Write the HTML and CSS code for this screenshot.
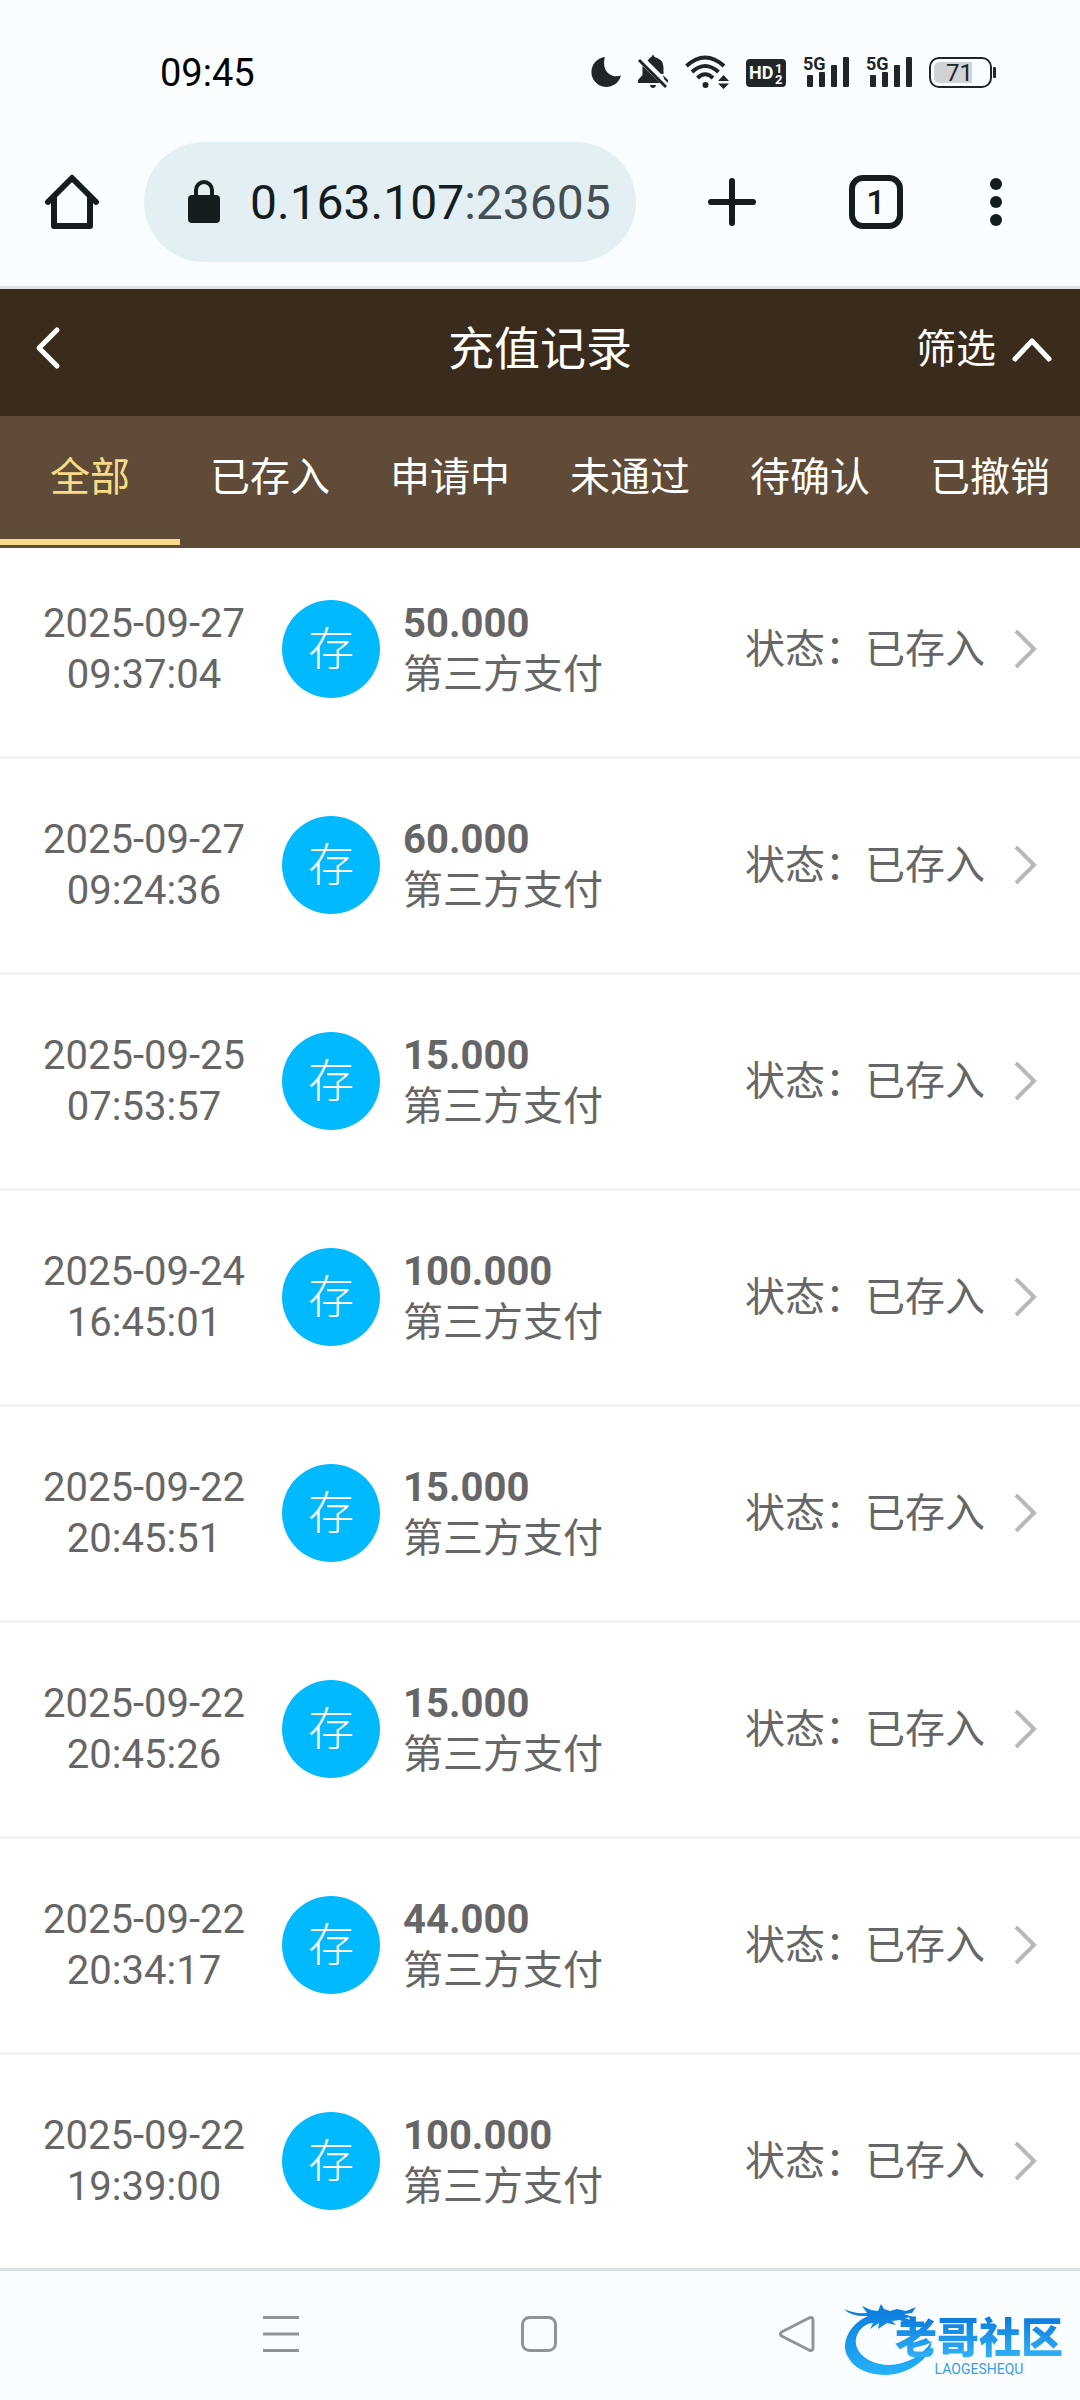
FILE: index.html
```html
<!DOCTYPE html>
<html lang="zh-CN">
<head>
<meta charset="utf-8">
<meta name="viewport" content="width=device-width, initial-scale=1">
<title>充值记录</title>
<link rel="stylesheet" href="styles.css">
</head>
<body>
<div class="status-bar">
  <time class="clock">09:45</time>
  <div class="status-icons">
    <svg width="29" height="34" viewBox="0 0 29 34" fill="#212527"><path d="M13 2A15 15 0 1 0 29 20.500C26 21.500 22 22 18 19.500C12 16 11 8 13 2Z"/></svg>
    <svg width="30" height="34" viewBox="0 0 30 34" fill="#212527"><path d="M11 4Q12 2 13.500 2Q14 0 15 0Q16 0 16.500 2Q25 4 25.500 12V19L23 19L9.500 5.500ZM4.500 11L22 28H0V25L4.500 20ZM12 30H18Q17.500 33 15 33Q12.500 33 12 30Z"/><path d="M25 20L30 25V28L26 24Z"/><path d="M1 5L28 32" stroke="#212527" stroke-width="3"/></svg>
    <svg width="44" height="34" viewBox="0 0 44 34" fill="none" stroke="#212527" stroke-width="4"><path d="M1.500 11Q20 -6 39 11"/><path d="M7 17Q20 5 33.500 17"/><path d="M12.500 23Q20 15.500 28 23"/><circle cx="20.500" cy="30" r="3" fill="#212527" stroke="none"/><path d="M38.500 20L44 26H33ZM33 28.500H44L38.500 34Z" fill="#212527" stroke="none"/></svg>
    <svg width="40" height="34" viewBox="0 0 40 34"><rect y="4" width="40" height="28" rx="4" fill="#212527"/><g class="svg-text" fill="#f9fdff"><text x="3" y="24" font-size="18" font-weight="700">HD</text><text x="29" y="18" font-size="13" font-weight="700">1</text><text x="29" y="29" font-size="13" font-weight="700">2</text></g></svg>
    <svg width="46" height="34" viewBox="0 0 46 34" fill="#212527"><text class="svg-text" x="0" y="15" font-size="18" font-weight="700">5G</text><rect x="4" y="20" width="6" height="12" rx="1"/><rect x="16" y="17" width="6" height="15" rx="1"/><rect x="28" y="10" width="6" height="22" rx="1"/><rect x="40" y="2" width="6" height="30" rx="1"/></svg>
    <svg width="46" height="34" viewBox="0 0 46 34" fill="#212527"><text class="svg-text" x="0" y="15" font-size="18" font-weight="700">5G</text><rect x="4" y="20" width="6" height="12" rx="1"/><rect x="16" y="17" width="6" height="15" rx="1"/><rect x="28" y="10" width="6" height="22" rx="1"/><rect x="40" y="2" width="6" height="30" rx="1"/></svg>
    <svg width="67" height="34" viewBox="0 0 67 34"><rect x="1" y="3" width="61" height="29" rx="9" fill="none" stroke="#212527" stroke-width="2"/><path d="M11 7H43V28H11Q5 28 5 22V13Q5 7 11 7Z" fill="#d0d3d5"/><rect x="64" y="12" width="3" height="11" rx="1" fill="#212527"/><text class="svg-text" x="17" y="26" font-size="24" fill="#212527">71</text></svg>
  </div>
</div>

<div class="toolbar">
  <button class="tool tool-home" type="button" aria-label="主页"><svg width="54" height="54" viewBox="0 0 54 54" fill="none" stroke="#141c1e" stroke-width="6" stroke-linejoin="round" stroke-linecap="round"><path d="M3 27L27 3L51 27"/><path d="M9 23V51H45V23"/></svg></button>
  <div class="omnibox">
    <svg width="32" height="44" viewBox="0 0 32 44"><path d="M8 17V10A8 8 0 0 1 24 10V17" fill="none" stroke="#141c1e" stroke-width="4"/><rect y="15" width="32" height="28" rx="4" fill="#141c1e"/></svg>
    <p class="url">0.163.107<span class="port">:23605</span></p>
  </div>
  <button class="tool tool-add" type="button" aria-label="新标签页"><svg width="48" height="48" viewBox="0 0 48 48" stroke="#141c1e" stroke-width="6" stroke-linecap="round"><path d="M24 3V45M3 24H45"/></svg></button>
  <button class="tool" type="button" aria-label="标签页"><span class="tab-count">1</span></button>
  <button class="tool tool-menu" type="button" aria-label="菜单"><svg width="12" height="48" viewBox="0 0 12 48" fill="#141c1e"><circle cx="6" cy="6" r="6"/><circle cx="6" cy="24" r="6"/><circle cx="6" cy="42" r="6"/></svg></button>
</div>

<header class="page-header">
  <button class="back" type="button" aria-label="返回"><svg width="24" height="42" viewBox="0 0 24 42" fill="none" stroke="#fff" stroke-width="5" stroke-linecap="round" stroke-linejoin="round"><path d="M21 3L3 21L21 39"/></svg></button>
  <h1 class="title">充值记录</h1>
  <button class="filter" type="button">筛选<svg width="40" height="24" viewBox="0 0 40 24" fill="none" stroke="#fff" stroke-width="5" stroke-linecap="round" stroke-linejoin="round"><path d="M3 21L20 3L37 21"/></svg></button>
</header>

<nav class="tabs">
  <button class="tab active" type="button">全部</button>
  <button class="tab" type="button">已存入</button>
  <button class="tab" type="button">申请中</button>
  <button class="tab" type="button">未通过</button>
  <button class="tab" type="button">待确认</button>
  <button class="tab" type="button">已撤销</button>
</nav>

<ul class="records">
  <li><a class="record" href="#"><time class="date">2025-09-27<br>09:37:04</time><span class="badge">存</span><span class="detail"><b>50.000</b><br>第三方支付</span><span class="state">状态：已存入</span><svg class="go" viewBox="0 0 24 42"><path d="M3 3L21 21L3 39"/></svg></a></li>
  <li><a class="record" href="#"><time class="date">2025-09-27<br>09:24:36</time><span class="badge">存</span><span class="detail"><b>60.000</b><br>第三方支付</span><span class="state">状态：已存入</span><svg class="go" viewBox="0 0 24 42"><path d="M3 3L21 21L3 39"/></svg></a></li>
  <li><a class="record" href="#"><time class="date">2025-09-25<br>07:53:57</time><span class="badge">存</span><span class="detail"><b>15.000</b><br>第三方支付</span><span class="state">状态：已存入</span><svg class="go" viewBox="0 0 24 42"><path d="M3 3L21 21L3 39"/></svg></a></li>
  <li><a class="record" href="#"><time class="date">2025-09-24<br>16:45:01</time><span class="badge">存</span><span class="detail"><b>100.000</b><br>第三方支付</span><span class="state">状态：已存入</span><svg class="go" viewBox="0 0 24 42"><path d="M3 3L21 21L3 39"/></svg></a></li>
  <li><a class="record" href="#"><time class="date">2025-09-22<br>20:45:51</time><span class="badge">存</span><span class="detail"><b>15.000</b><br>第三方支付</span><span class="state">状态：已存入</span><svg class="go" viewBox="0 0 24 42"><path d="M3 3L21 21L3 39"/></svg></a></li>
  <li><a class="record" href="#"><time class="date">2025-09-22<br>20:45:26</time><span class="badge">存</span><span class="detail"><b>15.000</b><br>第三方支付</span><span class="state">状态：已存入</span><svg class="go" viewBox="0 0 24 42"><path d="M3 3L21 21L3 39"/></svg></a></li>
  <li><a class="record" href="#"><time class="date">2025-09-22<br>20:34:17</time><span class="badge">存</span><span class="detail"><b>44.000</b><br>第三方支付</span><span class="state">状态：已存入</span><svg class="go" viewBox="0 0 24 42"><path d="M3 3L21 21L3 39"/></svg></a></li>
  <li><a class="record" href="#"><time class="date">2025-09-22<br>19:39:00</time><span class="badge">存</span><span class="detail"><b>100.000</b><br>第三方支付</span><span class="state">状态：已存入</span><svg class="go" viewBox="0 0 24 42"><path d="M3 3L21 21L3 39"/></svg></a></li>
</ul>

<footer class="system-nav">
  <button class="key" type="button" aria-label="最近任务"><svg width="36" height="36" viewBox="0 0 36 36"><path d="M0 1.500H36M0 18H36M0 34.500H36"/></svg></button>
  <button class="key" type="button" aria-label="主屏幕"><svg width="36" height="36" viewBox="0 0 36 36"><rect x="1.500" y="1.500" width="33" height="33" rx="7"/></svg></button>
  <button class="key" type="button" aria-label="后退"><svg width="36" height="36" viewBox="0 0 36 36" stroke-linejoin="round"><path d="M2.500 16Q0.500 18 2.500 20L30 34Q34 35.500 34 32V4Q34 0.500 30 2Z"/></svg></button>
  <div class="watermark">
    <svg class="dragon" width="100" height="80" viewBox="0 0 100 80">
      <defs><linearGradient id="blue" x1="0" y1="0" x2="0" y2="1"><stop offset="0" stop-color="#0b79dc"/><stop offset="1" stop-color="#25b2fa"/></linearGradient></defs>
      <path fill="url(#blue)" d="M26 16C7 24-2 44 6 57C16 77 54 82 77 63Q88 55 90 41C78 59 57 68 38 64C14 59 7 39 21 27Q26 23 31 23L28 29L37 23L36 29L45 23L54 25L50 21L58 20L65 24L71 21L63 18L71 17L62 14L70 13L74 7L64 11L55 9L48 11L42 9L39 4L36 11L29 10L20 6L25 13Q12 14 2 9Q9 17 26 16Z"/>
    </svg>
    <div class="brand"><span class="brand-name">老哥社区</span><span class="brand-latin">LAOGESHEQU</span></div>
  </div>
</footer>
</body>
</html>
```
FILE: styles.css
```css
* {
  box-sizing: border-box;
}

body {
  margin: 0;
  min-height: 100vh;
  display: flex;
  flex-direction: column;
  background: #fff;
  color: #666;
  font: 40px/51px Roboto, "Noto Sans CJK SC", sans-serif;
}

button {
  margin: 0;
  padding: 0;
  border: 0;
  background: none;
  color: inherit;
  font: inherit;
  display: flex;
  align-items: center;
  justify-content: center;
}

svg {
  display: block;
  flex: none;
  overflow: visible;
}

.svg-text {
  font-family: Roboto, sans-serif;
}

/* Phone status bar */
.status-bar {
  display: flex;
  align-items: center;
  justify-content: space-between;
  padding: 50px 84px 0 160px;
  background: #f9fdff;
}

.clock {
  padding-top: 2px;
  color: #000;
  font-size: 38px;
  line-height: 42px;
}

.status-icons {
  display: flex;
  gap: 17px;
}

/* Browser toolbar */
.toolbar {
  display: flex;
  align-items: center;
  padding: 48px 36px 24px 0;
  border-bottom: 3px solid #dde3e3;
  background: #f9fdff;
}

.tool {
  width: 144px;
  height: 120px;
}

.tool-add {
  margin-left: 24px;
}

.tool-menu {
  width: 96px;
}

.omnibox {
  flex: 1;
  min-width: 0;
  height: 120px;
  display: flex;
  align-items: center;
  gap: 30px;
  padding-left: 44px;
  border-radius: 60px;
  background: #e4eff4;
}

.url {
  margin: 0;
  padding-top: 2px;
  color: #141c1e;
  font-size: 48px;
  line-height: 56px;
}

.port {
  color: #454f53;
}

.tab-count {
  width: 54px;
  height: 54px;
  border: 6px solid #141c1e;
  border-radius: 14px;
  color: #141c1e;
  font-size: 34px;
  font-weight: 500;
  line-height: 42px;
  text-align: center;
}

/* Page header */
.page-header {
  display: grid;
  grid-template-columns: 1fr auto 1fr;
  align-items: center;
  height: 127px;
  padding: 0 28px 6px 28px;
  background: #3a2c1c;
  color: #fff;
}

.back {
  justify-self: start;
  padding: 0 10px 4px 8px;
}

.title {
  margin: 0;
  font-size: 46px;
  font-weight: 400;
}

.filter {
  justify-self: end;
  gap: 16px;
}

.tabs {
  display: grid;
  grid-template-columns: repeat(6, 1fr);
  padding-bottom: 3px;
  background: #5f4b37;
  color: #fff;
}

.tab {
  height: 129px;
  border-bottom: 6px solid transparent;
  white-space: nowrap;
}

.tab.active {
  border-color: #f8db88;
  color: #f8db88;
}

/* Deposit records */
.records {
  flex: 1;
  margin: 0;
  padding: 0;
  list-style: none;
}

.record {
  display: flex;
  align-items: center;
  padding: 55px 43px 56px 42px;
  border-bottom: 3px solid #f4f4f4;
  color: inherit;
  text-decoration: none;
}

li:first-child .record {
  padding-top: 50px;
}

li:last-child .record {
  border-bottom: 0;
}

.date {
  width: 204px;
  text-align: center;
}

.badge {
  width: 98px;
  height: 98px;
  margin: 0 23px 0 36px;
  border-radius: 50%;
  background: #00b9ff;
  color: #fff;
  font-size: 46px;
  font-weight: 300;
  line-height: 98px;
  text-align: center;
}

.detail {
  flex: 1;
}

.go {
  width: 24px;
  height: 42px;
  margin-left: 28px;
  fill: none;
  stroke: #b8b8b8;
  stroke-width: 4;
}

/* Phone navigation keys */
.system-nav {
  position: relative;
  display: flex;
  justify-content: center;
  padding: 0 2px 3px 0;
  border-top: 3px solid #d8e4e4;
  background: #f9fdff;
}

.key {
  width: 258px;
  height: 126px;
}

.key svg {
  fill: none;
  stroke: #8f9597;
  stroke-width: 3;
}

.watermark {
  position: absolute;
  right: 12px;
  bottom: 20px;
  width: 226px;
  height: 80px;
}

.dragon {
  position: absolute;
  left: 0;
  top: 0;
}

.brand {
  position: absolute;
  right: 5px;
  top: 16px;
  display: flex;
  flex-direction: column;
  align-items: center;
}

.brand-name {
  background: linear-gradient(#0b79dc, #35b8fa);
  background-clip: text;
  -webkit-background-clip: text;
  color: transparent;
  font-size: 42px;
  font-weight: 900;
  line-height: 46px;
}

.brand-latin {
  color: #3a9ce8;
  font-size: 14px;
  line-height: 14px;
}
```
